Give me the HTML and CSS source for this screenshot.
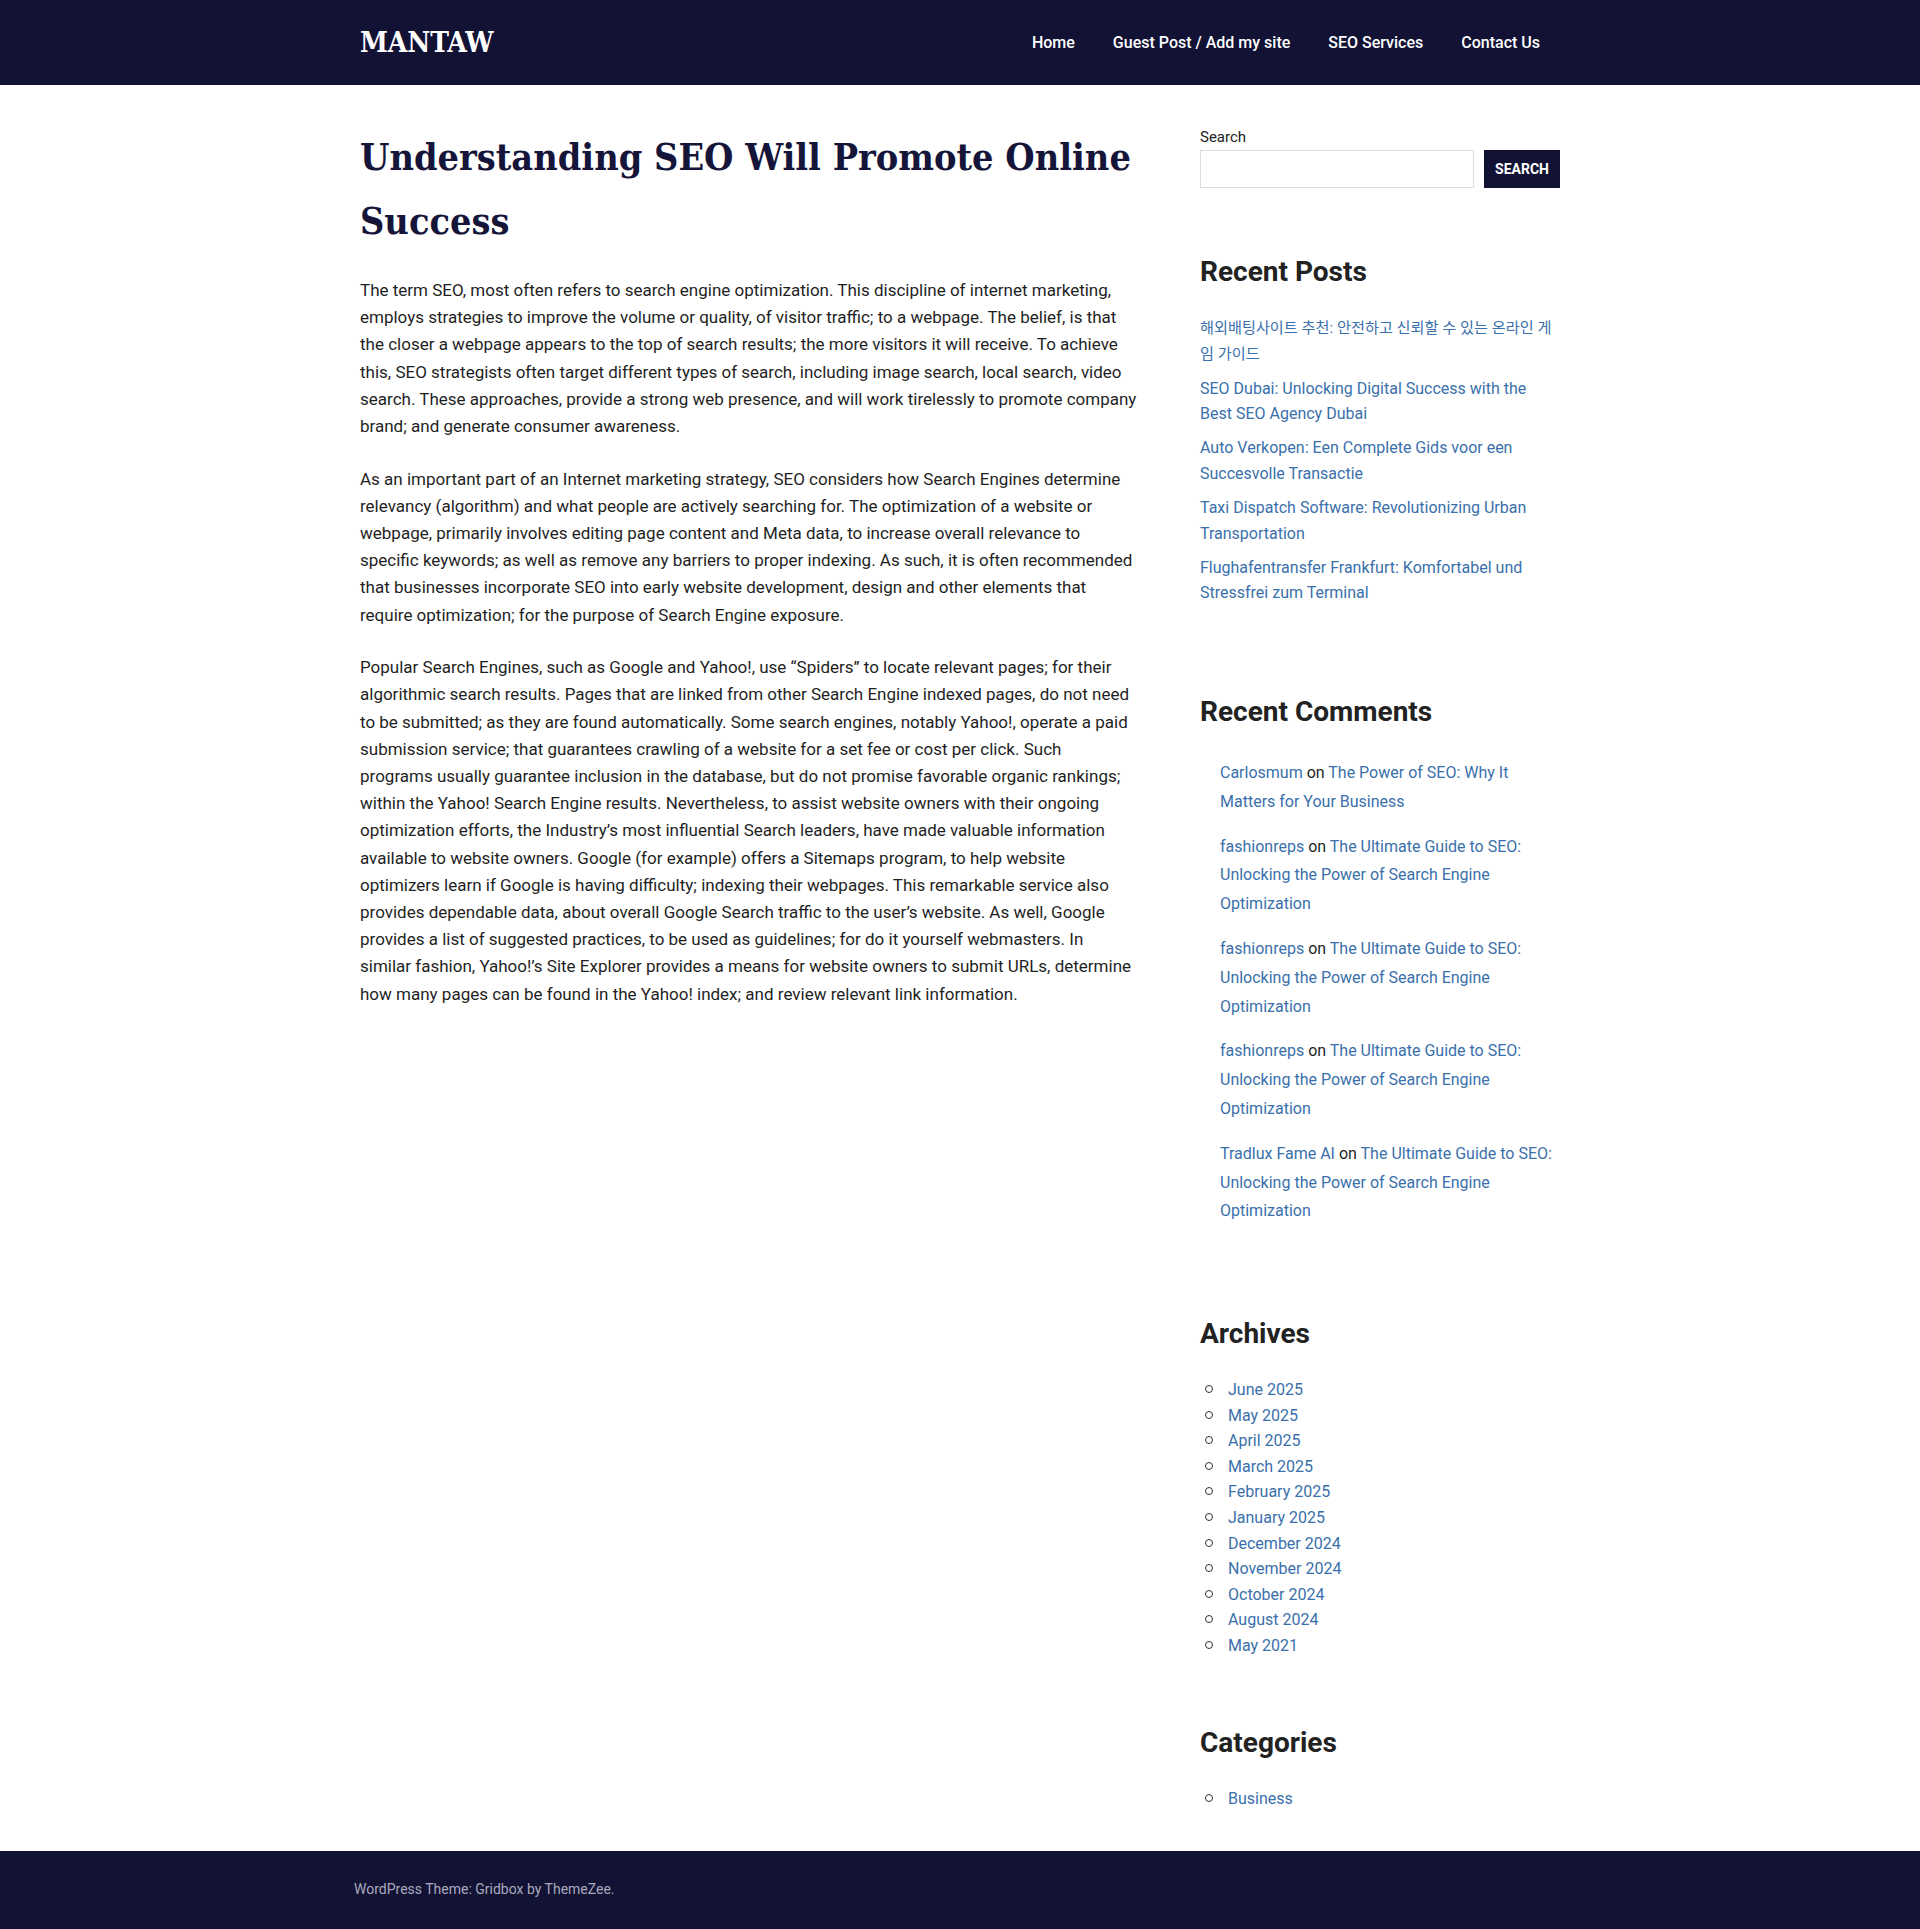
FILE: index.html
```html
<!DOCTYPE html>
<html lang="en">
<head>
<meta charset="utf-8">
<title>Understanding SEO Will Promote Online Success – MANTAW</title>
<link rel="stylesheet" href="styles.css">
</head>
<body>
<header class="site-header">
  <div class="header-inner">
    <a class="site-title" href="#">MANTAW</a>
    <nav class="main-nav">
      <ul class="menu">
        <li><a href="#">Home</a></li>
        <li><a href="#">Guest Post / Add my site</a></li>
        <li><a href="#">SEO Services</a></li>
        <li><a href="#">Contact Us</a></li>
      </ul>
    </nav>
  </div>
</header>

<div class="site-content">
  <main class="content-area">
    <article class="post">
      <h1 class="entry-title">Understanding SEO Will Promote Online Success</h1>
      <div class="entry-content">
        <p>The term SEO, most often refers to search engine optimization. This discipline of internet marketing, employs strategies to improve the volume or quality, of visitor traffic; to a webpage. The belief, is that the closer a webpage appears to the top of search results; the more visitors it will receive. To achieve this, SEO strategists often target different types of search, including image search, local search, video search. These approaches, provide a strong web presence, and will work tirelessly to promote company brand; and generate consumer awareness.</p>
        <p>As an important part of an Internet marketing strategy, SEO considers how Search Engines determine relevancy (algorithm) and what people are actively searching for. The optimization of a website or webpage, primarily involves editing page content and Meta data, to increase overall relevance to specific keywords; as well as remove any barriers to proper indexing. As such, it is often recommended that businesses incorporate SEO into early website development, design and other elements that require optimization; for the purpose of Search Engine exposure.</p>
        <p>Popular Search Engines, such as Google and Yahoo!, use “Spiders” to locate relevant pages; for their algorithmic search results. Pages that are linked from other Search Engine indexed pages, do not need to be submitted; as they are found automatically. Some search engines, notably Yahoo!, operate a paid submission service; that guarantees crawling of a website for a set fee or cost per click. Such programs usually guarantee inclusion in the database, but do not promise favorable organic rankings; within the Yahoo! Search Engine results. Nevertheless, to assist website owners with their ongoing optimization efforts, the Industry’s most influential Search leaders, have made valuable information available to website owners. Google (for example) offers a Sitemaps program, to help website optimizers learn if Google is having difficulty; indexing their webpages. This remarkable service also provides dependable data, about overall Google Search traffic to the user’s website. As well, Google provides a list of suggested practices, to be used as guidelines; for do it yourself webmasters. In similar fashion, Yahoo!’s Site Explorer provides a means for website owners to submit URLs, determine how many pages can be found in the Yahoo! index; and review relevant link information.</p>
      </div>
    </article>
  </main>

  <aside class="sidebar">
    <section class="widget widget-search">
      <label class="search-label" for="s">Search</label>
      <form class="search-form">
        <input class="search-input" id="s" type="search">
        <button class="search-button" type="button">SEARCH</button>
      </form>
    </section>

    <section class="widget widget-posts">
      <h2 class="widget-title">Recent Posts</h2>
      <ul class="latest-posts">
        <li class="ko"><a href="#">해외배팅사이트 추천: 안전하고 신뢰할 수 있는 온라인 게임 가이드</a></li>
        <li><a href="#">SEO Dubai: Unlocking Digital Success with the Best SEO Agency Dubai</a></li>
        <li><a href="#">Auto Verkopen: Een Complete Gids voor een Succesvolle Transactie</a></li>
        <li><a href="#">Taxi Dispatch Software: Revolutionizing Urban Transportation</a></li>
        <li><a href="#">Flughafentransfer Frankfurt: Komfortabel und Stressfrei zum Terminal</a></li>
      </ul>
    </section>

    <section class="widget widget-comments">
      <h2 class="widget-title">Recent Comments</h2>
      <ol class="latest-comments">
        <li><a href="#">Carlosmum</a> on <a href="#">The Power of SEO: Why It Matters for Your Business</a></li>
        <li><a href="#">fashionreps</a> on <a href="#">The Ultimate Guide to SEO: Unlocking the Power of Search Engine Optimization</a></li>
        <li><a href="#">fashionreps</a> on <a href="#">The Ultimate Guide to SEO: Unlocking the Power of Search Engine Optimization</a></li>
        <li><a href="#">fashionreps</a> on <a href="#">The Ultimate Guide to SEO: Unlocking the Power of Search Engine Optimization</a></li>
        <li><a href="#">Tradlux Fame AI</a> on <a href="#">The Ultimate Guide to SEO: Unlocking the Power of Search Engine Optimization</a></li>
      </ol>
    </section>

    <section class="widget widget-archives">
      <h2 class="widget-title">Archives</h2>
      <ul class="circle-list">
        <li><a href="#">June 2025</a></li>
        <li><a href="#">May 2025</a></li>
        <li><a href="#">April 2025</a></li>
        <li><a href="#">March 2025</a></li>
        <li><a href="#">February 2025</a></li>
        <li><a href="#">January 2025</a></li>
        <li><a href="#">December 2024</a></li>
        <li><a href="#">November 2024</a></li>
        <li><a href="#">October 2024</a></li>
        <li><a href="#">August 2024</a></li>
        <li><a href="#">May 2021</a></li>
      </ul>
    </section>

    <section class="widget widget-categories">
      <h2 class="widget-title">Categories</h2>
      <ul class="circle-list">
        <li><a href="#">Business</a></li>
      </ul>
    </section>
  </aside>
</div>

<footer class="site-footer">
  <div class="footer-inner">WordPress Theme: Gridbox by ThemeZee.</div>
</footer>
</body>
</html>
```

FILE: styles.css
```css
* { box-sizing: border-box; }

html, body {
  margin: 0;
  padding: 0;
}

body {
  font-family: Roboto, "Noto Sans CJK KR", "Liberation Sans", sans-serif;
  font-size: 17px;
  line-height: 1.6;
  color: #1f1f1f;
  background: #ffffff;
}

a { color: #3a70ab; text-decoration: none; }

/* Header */
.site-header {
  background: #121235;
  height: 85px;
}

.header-inner {
  width: 1200px;
  height: 85px;
  margin: 0 auto;
  display: flex;
  align-items: center;
  justify-content: space-between;
}

.site-title {
  font-family: "DejaVu Serif Condensed", "DejaVu Serif", serif;
  font-stretch: condensed;
  font-weight: 700;
  font-size: 28px;
  line-height: 1;
  color: #ffffff;
  letter-spacing: -0.1px;
}

.menu {
  list-style: none;
  margin: 0;
  padding: 0;
  display: flex;
}

.menu a {
  display: block;
  padding: 0 19px;
  color: #ffffff;
  font-size: 16px;
  font-weight: 500;
  line-height: 24px;
}

.menu li:last-child a { padding-right: 20px; }

/* Content layout */
.site-content {
  width: 1200px;
  margin: 0 auto;
  padding: 40px 0 40px;
  display: flex;
  align-items: flex-start;
}

.content-area {
  width: 777px;
  margin-right: 63px;
}

.sidebar {
  width: 360px;
}

.entry-title {
  font-family: "DejaVu Serif Condensed", "DejaVu Serif", serif;
  font-stretch: condensed;
  font-weight: 700;
  font-size: 37.5px;
  line-height: 64px;
  color: #15153a;
  margin: 0 0 24px;
}

.entry-content p {
  margin: 0 0 25.5px;
}

/* Sidebar */
.widget {
  display: flow-root;
  margin-bottom: 64px;
  font-size: 16px;
}
.widget:last-child { margin-bottom: 0; }

.search-label {
  display: block;
  font-size: 15px;
  line-height: 24px;
  margin-bottom: 1px;
  color: #222222;
}

.search-form {
  display: flex;
  gap: 10px;
}

.search-input {
  flex: 1;
  height: 38px;
  border: 1px solid #dddddd;
  margin: 0;
  padding: 4px 8px;
  font-size: 15px;
  background: #fff;
}

.search-button {
  height: 38px;
  width: 76px;
  border: none;
  margin: 0;
  padding: 0;
  background: #121235;
  color: #ffffff;
  font-family: Roboto, sans-serif;
  font-size: 14px;
  font-weight: 700;
}

.widget-title {
  font-size: 28px;
  font-weight: 700;
  line-height: 39px;
  margin: 0 0 25px;
  color: #222222;
}

.widget-comments .widget-title { margin-bottom: 28px; }

.latest-posts {
  list-style: none;
  margin: 0 0 22px;
  padding: 0;
  line-height: 25.6px;
}

.latest-posts li { margin-bottom: 8.5px; }
.latest-posts li:last-child { margin-bottom: 0; }

.latest-posts li.ko {
  font-size: 15.2px;
  line-height: 25.6px;
  word-break: break-all;
}

.latest-comments {
  list-style: none;
  margin: 0 0 24px;
  padding: 0 0 0 20px;
  line-height: 28.8px;
}

.latest-comments li { margin-bottom: 16px; }
.latest-comments li:last-child { margin-bottom: 0; }

.widget-archives .widget-title,
.widget-categories .widget-title { margin-bottom: 24px; }

.circle-list {
  list-style: none;
  margin: 0;
  padding: 0 0 0 26px;
  line-height: 25.6px;
}

.circle-list li::before {
  content: "";
  display: inline-block;
  width: 6px;
  height: 6px;
  border: 1px solid #333333;
  border-radius: 50%;
  margin-left: -21px;
  margin-right: 15px;
  vertical-align: 2px;
}

/* Footer */
.site-footer {
  background: #121235;
  height: 78px;
}

.footer-inner {
  width: 1212px;
  margin: 0 auto;
  padding: 27px 0;
  font-size: 14px;
  line-height: 22.4px;
  color: #a9a9bb;
}
```
